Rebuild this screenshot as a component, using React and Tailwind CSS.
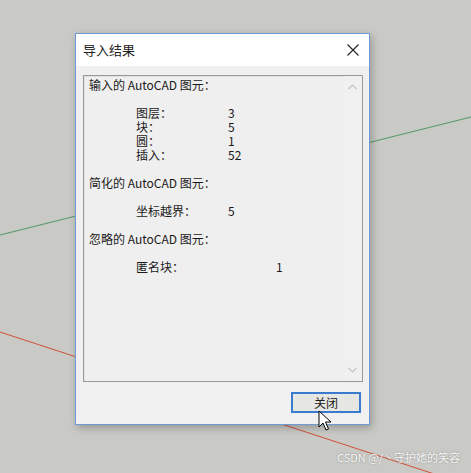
import React from "react";

const F = { fontFamily: '"Noto Sans CJK SC", "Noto Sans", sans-serif' };

function Row({ label, value, valueX = 139, indent = 47 }) {
  return (
    <div className="flex h-[14px] items-center leading-[14px]">
      <span className="shrink-0 block h-[14px]" style={{ width: valueX }}>
        <span className="block h-[14px]" style={{ marginLeft: indent }}>{label}</span>
      </span>
      <span className="block h-[14px]">{value}</span>
    </div>
  );
}

export default function App() {
  return (
    <div className="relative w-[471px] h-[473px] overflow-hidden bg-[#c9c9c5]" style={F}>
      <svg className="absolute inset-0" width="471" height="473">
        <line x1="0" y1="235" x2="471" y2="117" stroke="#4f9a62" strokeWidth="1" />
        <line x1="0" y1="332" x2="471" y2="486" stroke="#d0503c" strokeWidth="1" />
      </svg>
      <div className="relative pl-[75px] pt-[33px]">
        <div className="w-[295px] h-[392px] flex flex-col border border-[#6e9bd3] bg-[#f0f0f0] shadow-[2px_3px_8px_rgba(0,0,0,0.25)]">
          <div className="h-[32px] shrink-0 bg-white flex items-center justify-between pl-[7px] pr-[10px]">
            <span className="text-[13px] text-[#222]">导入结果</span>
            <svg width="12" height="12" viewBox="0 0 12 12">
              <path d="M0.5 0.5 L11.5 11.5 M11.5 0.5 L0.5 11.5" stroke="#222" strokeWidth="1.1" />
            </svg>
          </div>
          <div className="flex-1 flex flex-col pl-[7px] pr-[6px] pt-[9px]">
            <div className="h-[307px] flex border border-[#9a9a9a] shadow-[inset_1px_1px_0_#e0e0e0] bg-[#efefef]">
              <div className="flex-1 pl-[5px] pt-[2px] text-[12px] leading-[14px] text-[#1a1a1a]">
                <div className="h-[14px] flex items-center">输入的 AutoCAD 图元：</div>
                <div className="h-[14px]" />
                <Row label="图层：" value="3" />
                <Row label="块：" value="5" />
                <Row label="圆：" value="1" />
                <Row label="插入：" value="52" />
                <div className="h-[14px]" />
                <div className="h-[14px] flex items-center">简化的 AutoCAD 图元：</div>
                <div className="h-[14px]" />
                <Row label="坐标越界：" value="5" />
                <div className="h-[14px]" />
                <div className="h-[14px] flex items-center">忽略的 AutoCAD 图元：</div>
                <div className="h-[14px]" />
                <Row label="匿名块：" value="1" valueX={187} />
              </div>
              <div className="w-[19px] flex flex-col justify-between items-center py-[8px] bg-[#f0f0f0]">
                <svg width="9" height="6" viewBox="0 0 9 6">
                  <path d="M0.5 5 L4.5 1 L8.5 5" fill="none" stroke="#c4c4c4" strokeWidth="1.2" />
                </svg>
                <svg width="9" height="6" viewBox="0 0 9 6">
                  <path d="M0.5 1 L4.5 5 L8.5 1" fill="none" stroke="#c4c4c4" strokeWidth="1.2" />
                </svg>
              </div>
            </div>
            <div className="flex justify-end mt-[10px] pr-[2px]">
              <div className="relative w-[70px] h-[21px] border-2 border-[#3a7bd0] bg-[#e6e6e2] flex items-center justify-center text-[12px] text-[#1a1a1a]">
                关闭
              </div>
            </div>
          </div>
        </div>
      </div>
      <svg className="absolute left-[318px] top-[410px]" width="14" height="22" viewBox="0 0 14 22">
        <path d="M1 1 L1 17 L5 13 L8 20 L10.5 19 L7.5 12 L13 12 Z" fill="#fff" stroke="#000" strokeWidth="1" strokeLinejoin="round" />
      </svg>
      <div className="absolute left-[337px] top-[450px] whitespace-nowrap text-[11px] leading-[14px] text-white/90 [text-shadow:0_0_2px_rgba(0,0,0,0.35)]">
        CSDN @/丶守护她的笑容
      </div>
    </div>
  );
}
